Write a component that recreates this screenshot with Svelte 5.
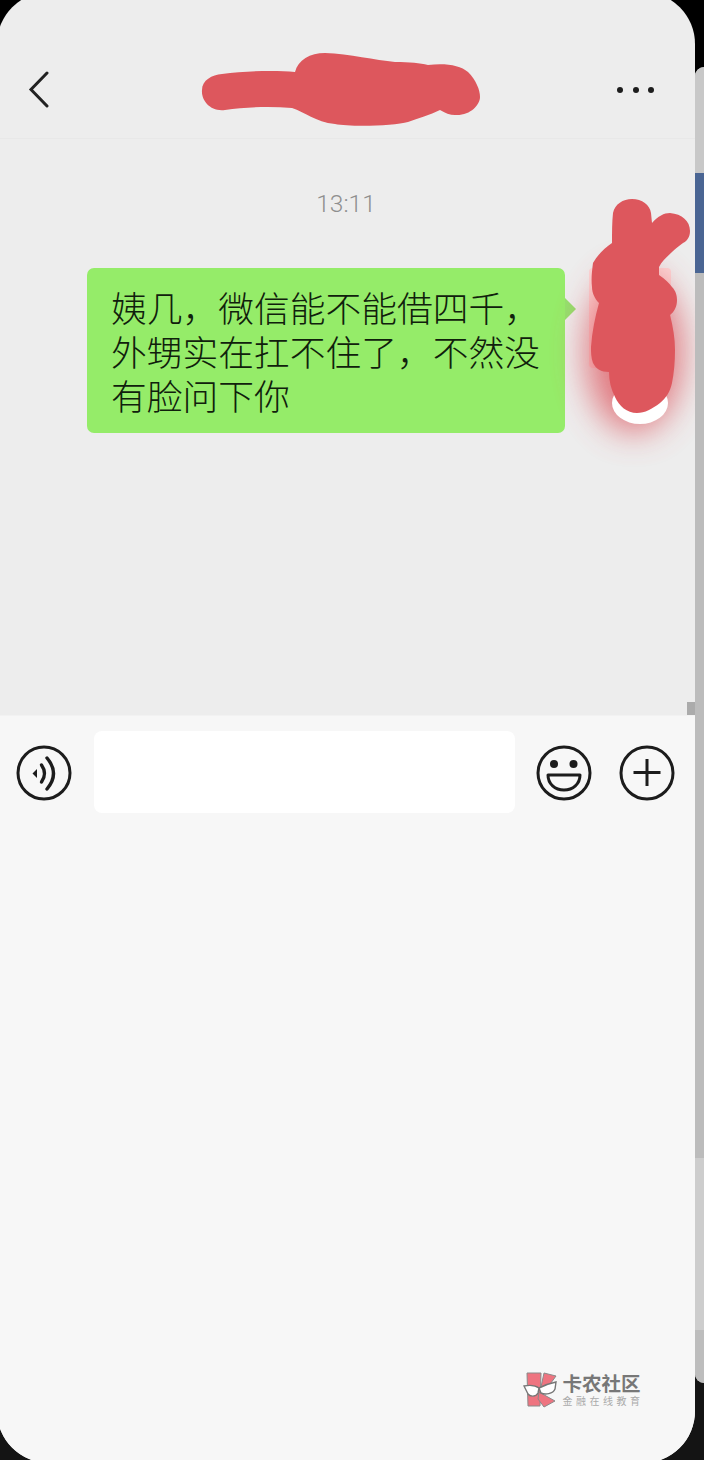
<script>
  const lines = ['姨几，微信能不能借四千，', '外甥实在扛不住了，不然没', '有脸问下你'];
</script>

<div class="app">
  <div class="frame">
    <header class="header">
      <svg class="back" width="22" height="38" viewBox="0 0 22 38" aria-hidden="true">
        <path d="M19 2 L3 18.5 L19 35" fill="none" stroke="#222" stroke-width="3" stroke-linecap="round" stroke-linejoin="miter" />
      </svg>
      <div class="dots"><i></i><i></i><i></i></div>
    </header>

    <main class="chat">
      <div class="time">13:11</div>
      <div class="row">
        <div class="bubble">
          {#each lines as line}
            <div>{line}</div>
          {/each}
        </div>
        <div class="avatar"></div>
      </div>
      <div class="scroll-mark"></div>
    </main>

    <section class="bar">
      <svg class="icon" width="56" height="56" viewBox="0 0 56 56" aria-hidden="true">
        <circle cx="28" cy="28" r="26" fill="none" stroke="#1c1c1c" stroke-width="3" />
        <path d="M16.5 28.5 L21 24 L21 33 Z" fill="#1c1c1c" />
        <path d="M25.5 20 Q31.5 28.5 25.5 37" fill="none" stroke="#1c1c1c" stroke-width="3.4" stroke-linecap="round" />
        <path d="M31 13 Q44 28.5 31 44" fill="none" stroke="#1c1c1c" stroke-width="3.4" stroke-linecap="round" />
      </svg>
      <div class="input"></div>
      <svg class="icon" width="56" height="56" viewBox="0 0 56 56" aria-hidden="true">
        <circle cx="28" cy="28" r="26" fill="none" stroke="#1c1c1c" stroke-width="3" />
        <circle cx="18" cy="19" r="4" fill="#1c1c1c" />
        <circle cx="37.5" cy="19" r="4" fill="#1c1c1c" />
        <path d="M12 30 H44 C44 39 37 45 28 45 C19 45 12 39 12 30 Z" fill="none" stroke="#1c1c1c" stroke-width="3" stroke-linejoin="round" />
      </svg>
      <svg class="icon plus" width="56" height="56" viewBox="0 0 56 56" aria-hidden="true">
        <circle cx="28" cy="28" r="26" fill="none" stroke="#1c1c1c" stroke-width="3" />
        <path d="M14.5 27.5 H41.5 M28 14 V41" fill="none" stroke="#1c1c1c" stroke-width="3" />
      </svg>
    </section>

    <div class="watermark">
      <svg width="34" height="38" viewBox="0 0 34 38" aria-hidden="true">
        <path d="M4 2 H18 L17 35 H5 Z" fill="#ee7480" stroke="#8a8a8a" stroke-width="1" />
        <path d="M21 2 L33 5 L25 16 L18 16 Z" fill="#ee7480" stroke="#8a8a8a" stroke-width="1" />
        <path d="M16 21 L32 30 L21 36 L15 28 Z" fill="#ee7480" stroke="#8a8a8a" stroke-width="1" />
        <path d="M1 15 C6 14 12 14 16 17 L15 22 C13 26 7 26 5 23 Z" fill="#fff" stroke="#777" stroke-width="1.4" />
        <path d="M16 17 C22 14 28 12 33 11 L32 18 C30 23 22 24 18 22 Z" fill="#fff" stroke="#777" stroke-width="1.4" />
      </svg>
      <div class="mark-text">
        <div class="mark-name">卡农社区</div>
        <div class="mark-sub">金融在线教育</div>
      </div>
    </div>

    <svg class="redactions" width="704" height="1460" viewBox="0 0 704 1460" aria-hidden="true">
      <defs>
        <filter id="glow" x="-60%" y="-60%" width="220%" height="220%">
          <feGaussianBlur stdDeviation="17" />
        </filter>
        <filter id="soft" x="-5%" y="-5%" width="110%" height="110%">
          <feGaussianBlur stdDeviation="0.6" />
        </filter>
      </defs>
      <ellipse cx="634" cy="352" rx="48" ry="80" fill="#dd4f58" opacity="0.75" filter="url(#glow)" />
      <ellipse cx="640" cy="403" rx="28" ry="21" fill="#fff" filter="url(#soft)" />
      <path class="blob" d="M222 74 C245 71 275 70 295 72 C298 60 310 53 325 53 C350 54 375 60 395 62 C410 62 420 63 428 65 C445 63 460 65 468 72 C476 80 480 90 480 97 C480 105 470 116 455 115 C450 115 445 113 440 110 C430 115 418 118 408 122 C395 126 350 127 335 124 C315 122 305 112 292 108 C270 106 245 107 225 110 C210 112 201 100 202 90 C202 80 212 75 222 74 Z" />
      <path class="blob" d="M612 243 C612 232 612 222 613 213 C615 204 623 199 632 199 C642 199 650 205 651 213 L652 223 C658 216 664 213 670 213 C682 214 690 221 690 231 C690 237 687 241 683 243 C679 246 675 249 672 252 C667 257 662 261 659 267 L659 275 C665 279 669 283 672 287 C676 291 677 296 677 300 C677 307 674 312 670 315 C673 327 675 338 675 350 C675 362 674 373 672 383 C670 392 666 398 660 403 C652 409 645 413 637 413 C627 413 619 406 615 397 C611 389 609 381 609 372 C601 372 596 369 593 363 C591 358 591 352 591 347 C592 332 595 317 599 303 C595 299 592 293 592 287 C591 279 592 271 593 263 C598 254 605 248 612 243 Z" />
    </svg>
  </div>

  <aside class="side">
    <div class="side-a"></div>
    <div class="side-blue"></div>
    <div class="side-b"></div>
    <div class="side-c"></div>
    <div class="side-d"></div>
  </aside>
</div>

<style>
  :global(body) {
    margin: 0;
    background: #000;
  }
  .app {
    width: 704px;
    height: 1460px;
    display: flex;
    overflow: hidden;
    background: linear-gradient(#000 0 1000px, #141414 1000px);
    font-family: "Noto Sans CJK SC", "Noto Sans", sans-serif;
  }
  .frame {
    position: relative;
    flex: 0 0 698px;
    height: 1471px;
    margin: -8px 0 0 -3px;
    display: flex;
    flex-direction: column;
    border-radius: 52px;
    overflow: hidden;
    background: #ededed;
  }
  .header {
    height: 147px;
    box-sizing: border-box;
    flex: none;
    display: flex;
    align-items: center;
    justify-content: space-between;
    padding: 50px 41px 0 30.5px;
    border-bottom: 1px solid #e8e8e8;
  }
  .dots {
    display: flex;
    gap: 9.5px;
  }
  .dots i {
    width: 6px;
    height: 6px;
    border-radius: 50%;
    background: #1d1d1d;
  }
  .chat {
    position: relative;
    height: 576px;
    flex: none;
    box-sizing: border-box;
    padding-top: 48px;
  }
  .time {
    text-align: center;
    font-family: Roboto, sans-serif;
    font-weight: 300;
    font-size: 24.5px;
    line-height: 34px;
    color: #8f8f8f;
  }
  .row {
    display: flex;
    align-items: flex-start;
    margin-top: 47px;
    padding-left: 90px;
  }
  .bubble {
    position: relative;
    width: 478px;
    height: 165px;
    box-sizing: border-box;
    padding: 17px 0 0 24px;
    border-radius: 7px;
    background: #95ec69;
    color: #10200c;
    font-size: 35.75px;
    font-weight: 300;
    line-height: 44px;
    white-space: nowrap;
  }
  .bubble::after {
    content: "";
    position: absolute;
    top: 30px;
    left: 478px;
    width: 11px;
    height: 22px;
    background: #93e06c;
    clip-path: polygon(0 0, 100% 50%, 0 100%);
  }
  .avatar {
    width: 82px;
    height: 100px;
    margin-left: 24px;
    border-radius: 4px;
    background: #fbd6d6;
  }
  .scroll-mark {
    position: absolute;
    right: 0;
    bottom: 0;
    width: 8px;
    height: 13px;
    background: #ababab;
  }
  .bar {
    flex: 1;
    display: flex;
    align-items: flex-start;
    box-sizing: border-box;
    padding: 15px 0 0 18.5px;
    background: #f7f7f7;
    border-top: 1px solid #f2f2f2;
  }
  .icon {
    flex: none;
    margin-top: 14px;
  }
  .input {
    flex: none;
    width: 421px;
    height: 82px;
    margin: 0 21.5px 0 22px;
    border-radius: 8px;
    background: #fff;
  }
  .plus {
    margin-left: 26.5px;
  }
  .watermark {
    position: absolute;
    left: 526px;
    top: 1379px;
    display: flex;
    gap: 2.5px;
  }
  .mark-text {
    padding: 2px 0 0 3px;
  }
  .mark-name {
    font-size: 19.5px;
    font-weight: 700;
    line-height: 20px;
    color: #777;
  }
  .mark-sub {
    margin-top: 2px;
    font-size: 10px;
    line-height: 12px;
    letter-spacing: 3.5px;
    white-space: nowrap;
    color: #aaa;
  }
  .redactions {
    position: absolute;
    left: 3px;
    top: 8px;
    pointer-events: none;
  }
  .blob {
    fill: #dd575d;
  }
  .side {
    flex: 1;
    height: 1316px;
    margin-top: 67px;
    display: flex;
    flex-direction: column;
    border-radius: 18px 0 0 18px;
    overflow: hidden;
    background: #bdbdbd;
  }
  .side-a {
    height: 106px;
    background: #c8c8c8;
  }
  .side-blue {
    height: 100px;
    background: #4a6593;
  }
  .side-b {
    height: 885px;
    background: #bcbcbc;
  }
  .side-c {
    height: 172px;
    background: #cdcdcd;
  }
  .side-d {
    flex: 1;
    background: #bdbdbd;
  }
</style>
